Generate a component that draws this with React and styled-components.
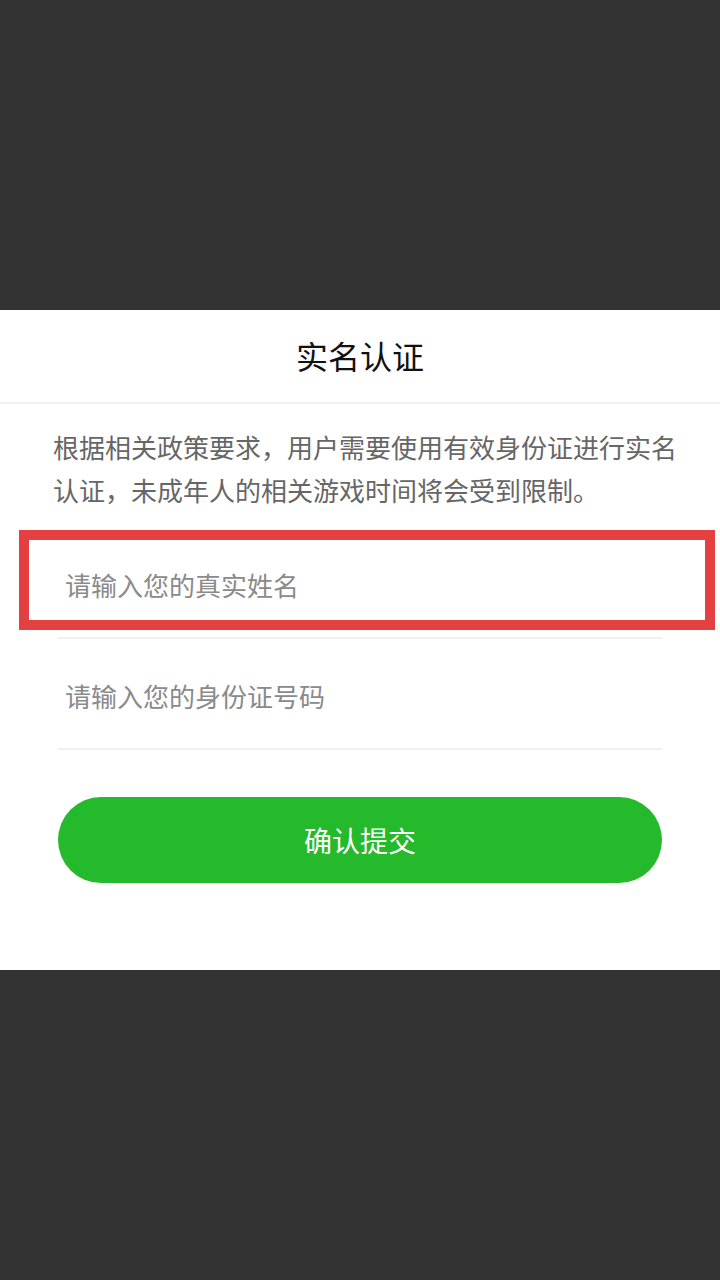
import React from "react";
import styled, { createGlobalStyle } from "styled-components";

const GlobalStyle = createGlobalStyle`
  html, body {
    margin: 0;
    padding: 0;
    background: #333333;
  }
  * { box-sizing: border-box; }
  body {
    font-family: "Noto Sans CJK SC", "Noto Sans", sans-serif;
  }
`;

const Screen = styled.div`
  width: 720px;
  height: 1280px;
  display: flex;
  flex-direction: column;
  justify-content: center;
  background: #333333;
`;

const Panel = styled.section`
  position: relative;
  width: 720px;
  height: 660px;
  background: #ffffff;
  display: flex;
  flex-direction: column;
`;

const Header = styled.header`
  height: 94px;
  display: flex;
  align-items: center;
  justify-content: center;
  border-bottom: 2px solid #f0f0f0;
`;

const Title = styled.h1`
  margin: 0;
  font-size: 32px;
  font-weight: 400;
  color: #111111;
  line-height: 1;
  padding-bottom: 2px;
`;

const Body = styled.div`
  padding: 21px 38px 0 53px;
  display: flex;
  flex-direction: column;
`;

const Notice = styled.p`
  margin: 0;
  font-size: 26px;
  line-height: 43px;
  color: #666666;
`;

const Form = styled.form`
  margin: 17px 20px 0 5px;
  display: flex;
  flex-direction: column;
`;

const Field = styled.div`
  height: 111px;
  border-bottom: 2px solid #f0f0f0;
  display: flex;
  align-items: center;
  padding: 4px 0 0 7px;
`;

const Input = styled.input`
  border: none;
  outline: none;
  width: 100%;
  font-family: inherit;
  font-size: 26px;
  color: #333333;
  background: transparent;
  padding: 0;
  &::placeholder {
    color: #8a8a8a;
  }
`;

const Submit = styled.button`
  margin-top: 47px;
  height: 86px;
  width: 604px;
  border: none;
  border-radius: 43px;
  background: #24ba2c;
  color: #ffffff;
  font-family: inherit;
  font-size: 28px;
  display: flex;
  align-items: center;
  justify-content: center;
  padding: 0;
`;

const Highlight = styled.div`
  position: absolute;
  left: 19px;
  top: 220px;
  width: 696px;
  height: 100px;
  border: 10px solid #e43f41;
  pointer-events: none;
`;

export default function App() {
  return (
    <>
      <GlobalStyle />
      <Screen>
        <Panel>
          <Header>
            <Title>实名认证</Title>
          </Header>
          <Body>
            <Notice>
              根据相关政策要求，用户需要使用有效身份证进行实名认证，未成年人的相关游戏时间将会受到限制。
            </Notice>
            <Form onSubmit={(e) => e.preventDefault()}>
              <Field>
                <Input placeholder="请输入您的真实姓名" />
              </Field>
              <Field>
                <Input placeholder="请输入您的身份证号码" />
              </Field>
              <Submit type="submit">确认提交</Submit>
            </Form>
          </Body>
          <Highlight />
        </Panel>
      </Screen>
    </>
  );
}
